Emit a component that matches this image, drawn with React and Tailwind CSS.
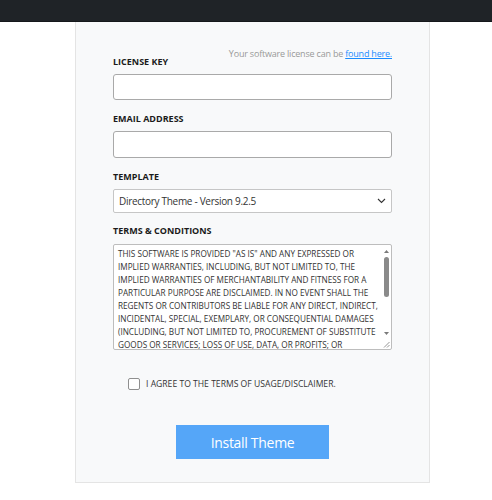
import { useState } from "react";

const TERMS =
  'THIS SOFTWARE IS PROVIDED "AS IS" AND ANY EXPRESSED OR IMPLIED WARRANTIES, INCLUDING, BUT NOT LIMITED TO, THE IMPLIED WARRANTIES OF MERCHANTABILITY AND FITNESS FOR A PARTICULAR PURPOSE ARE DISCLAIMED. IN NO EVENT SHALL THE REGENTS OR CONTRIBUTORS BE LIABLE FOR ANY DIRECT, INDIRECT, INCIDENTAL, SPECIAL, EXEMPLARY, OR CONSEQUENTIAL DAMAGES (INCLUDING, BUT NOT LIMITED TO, PROCUREMENT OF SUBSTITUTE GOODS OR SERVICES; LOSS OF USE, DATA, OR PROFITS; OR BUSINESS INTERRUPTION) HOWEVER CAUSED AND ON ANY THEORY OF LIABILITY, WHETHER IN CONTRACT, STRICT LIABILITY, OR TORT (INCLUDING NEGLIGENCE OR OTHERWISE) ARISING IN ANY WAY OUT OF THE USE OF THIS SOFTWARE, EVEN IF ADVISED OF THE POSSIBILITY OF SUCH DAMAGE.';

function Label({ children, className = "" }) {
  return (
    <label className={`block text-[9px] leading-[14px] font-bold text-[#1b1b1b] ${className}`}>
      {children}
    </label>
  );
}

// Thin scrollbar drawn beside the terms text (headless pages hide native ones)
function ScrollColumn() {
  return (
    <div className="flex w-[10px] shrink-0 flex-col items-center">
      <div className="flex h-[12px] items-center justify-center">
        <svg className="h-[3px] w-[5px]" viewBox="0 0 5 3">
          <path d="M2.5 0L5 3H0z" fill="#7a7a7a" />
        </svg>
      </div>
      <div className="flex-1">
        <div className="h-[40px] w-[5px] rounded-full bg-[#8a8a8a]" />
      </div>
      <div className="flex h-[12px] items-center justify-center">
        <svg className="h-[3px] w-[5px]" viewBox="0 0 5 3">
          <path d="M0 0h5L2.5 3z" fill="#7a7a7a" />
        </svg>
      </div>
      <div className="flex h-[10px] w-full items-end justify-end pb-[1px] pr-[1px]">
        <svg className="h-[7px] w-[7px]" viewBox="0 0 7 7" stroke="#8a8a8a" strokeWidth="0.9">
          <path d="M6.5 1L1 6.5M6.5 4L4 6.5" />
        </svg>
      </div>
    </div>
  );
}

export default function App() {
  const [agree, setAgree] = useState(false);
  const [template, setTemplate] = useState("directory");

  return (
    <div className="min-h-[500px] bg-white font-['Open_Sans',sans-serif]">
      {/* Top bar */}
      <div className="h-[22px] bg-[#1f2327] border-b border-[#15181b]" />

      {/* Form card */}
      <div className="ml-[75px] w-[355px] border border-t-0 border-[#e4e4e4] bg-[#f8f9fa] px-[37px] pt-[25px] pb-[23px]">
        <div className="flex justify-between">
          <Label className="mt-[8px]">LICENSE KEY</Label>
          <p className="text-[9px] leading-[14px] tracking-[-0.2px] text-[#999]">
            Your software license can be{" "}
            <a href="#" className="text-[#1a8cff] underline">
              found here.
            </a>
          </p>
        </div>
        <input
          type="text"
          className="mt-[5px] block h-[26px] w-full rounded-[3px] border border-[#a9a9a9] bg-white px-2 text-[11px] outline-none"
        />

        <Label className="mt-[12px]">EMAIL ADDRESS</Label>
        <input
          type="email"
          className="mt-[5px] block h-[27px] w-full rounded-[3px] border border-[#a9a9a9] bg-white px-2 text-[11px] outline-none"
        />

        <Label className="mt-[12px]">TEMPLATE</Label>
        <div className="relative mt-[5px]">
          <select
            value={template}
            onChange={(e) => setTemplate(e.target.value)}
            className="block h-[24px] w-full appearance-none rounded-[2px] border border-[#c6c6c6] bg-white pl-[5px] pr-6 text-[10px] tracking-[-0.3px] text-[#333] outline-none"
          >
            <option value="directory">Directory Theme - Version 9.2.5</option>
          </select>
          <svg
            className="pointer-events-none absolute right-[6px] top-[9px] h-[6px] w-[9px] text-[#333]"
            viewBox="0 0 9 6"
            fill="none"
            stroke="currentColor"
            strokeWidth="1.1"
          >
            <path d="M1 1l3.5 3.5L8 1" />
          </svg>
        </div>

        <Label className="mt-[11px]">TERMS &amp; CONDITIONS</Label>
        <div className="mt-[6px] flex h-[106px] overflow-hidden rounded-[2px] border border-[#bdbdbd] bg-white">
          <textarea
            readOnly
            value={TERMS}
            className="block h-full min-w-0 flex-1 resize-none overflow-hidden bg-transparent pl-[4px] pr-0 py-[2px] text-[8.2px] leading-[13px] text-[#333] outline-none"
          />
          <ScrollColumn />
        </div>

        <label className="mt-[27px] ml-[15px] flex items-center gap-[6px] text-[8.6px] leading-[14px] text-[#333]">
          <input
            type="checkbox"
            checked={agree}
            onChange={(e) => setAgree(e.target.checked)}
            className="h-[12px] w-[12px] appearance-none rounded-[2px] border border-[#8f8f8f] bg-white checked:bg-[#1a8cff]"
          />
          I AGREE TO THE TERMS OF USAGE/DISCLAIMER.
        </label>

        <div className="mt-[34px] flex justify-center">
          <button
            type="button"
            className="h-[34px] w-[153px] bg-[#55a6f8] text-[14px] tracking-[-0.3px] text-white"
          >
            Install Theme
          </button>
        </div>
      </div>
    </div>
  );
}
